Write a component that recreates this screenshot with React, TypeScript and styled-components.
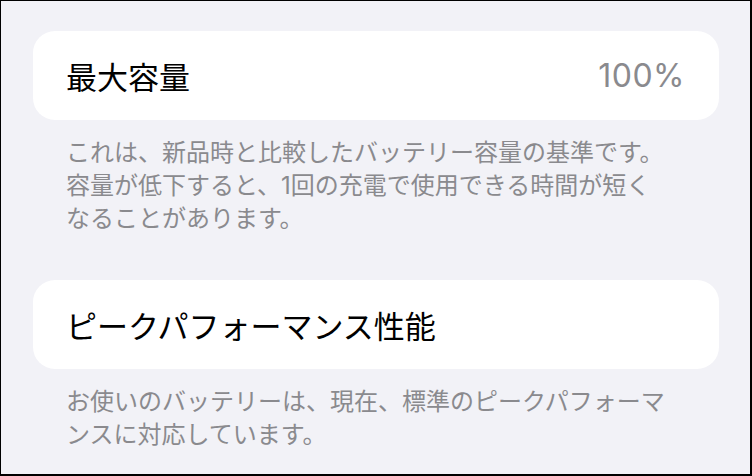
import styled, { createGlobalStyle } from "styled-components";

const GlobalStyle = createGlobalStyle`
  html, body {
    margin: 0;
    padding: 0;
  }
  body {
    font-family: "Inter", "Noto Sans CJK JP", sans-serif;
    -webkit-font-smoothing: antialiased;
  }
`;

interface ISection {
  title: string;
  value?: string;
  note: string;
}

const sections: ISection[] = [
  {
    title: "最大容量",
    value: "100%",
    note: "これは、新品時と比較したバッテリー容量の基準です。容量が低下すると、1回の充電で使用できる時間が短くなることがあります。",
  },
  {
    title: "ピークパフォーマンス性能",
    note: "お使いのバッテリーは、現在、標準のピークパフォーマンスに対応しています。",
  },
];

function App() {
  return (
    <>
      <GlobalStyle />
      <Page>
        {sections.map((s) => (
          <Section key={s.title}>
            <Card>
              <Title>{s.title}</Title>
              {s.value && <Value>{s.value}</Value>}
            </Card>
            <Note>{s.note}</Note>
          </Section>
        ))}
      </Page>
    </>
  );
}

const Page = styled.div`
  box-sizing: border-box;
  width: 752px;
  height: 476px;
  background-color: #f2f2f7;
  border-style: solid;
  border-color: #000;
  border-width: 1px 2px 2px 1px;
  padding: 30px 31px 0 32px;
  display: flex;
  flex-direction: column;
  gap: 45px;
  overflow: hidden;
`;

const Section = styled.section`
  display: flex;
  flex-direction: column;
`;

const Card = styled.div`
  height: 89px;
  background-color: #fff;
  border-radius: 22px;
  display: flex;
  align-items: center;
  justify-content: space-between;
  padding: 0 34px 0 33px;
`;

const Title = styled.div`
  font-family: "Noto Sans CJK JP", sans-serif;
  font-size: 31px;
  color: #000;
  line-height: 1;
`;

const Value = styled.div`
  font-size: 32px;
  color: #8a8a8e;
  line-height: 1;
  letter-spacing: 0.5px;
`;

const Note = styled.p`
  margin: 16px 0 0 0;
  padding: 0 51px 0 33px;
  font-size: 24px;
  line-height: 33px;
  color: #8a8a8e;
`;

export default App;
